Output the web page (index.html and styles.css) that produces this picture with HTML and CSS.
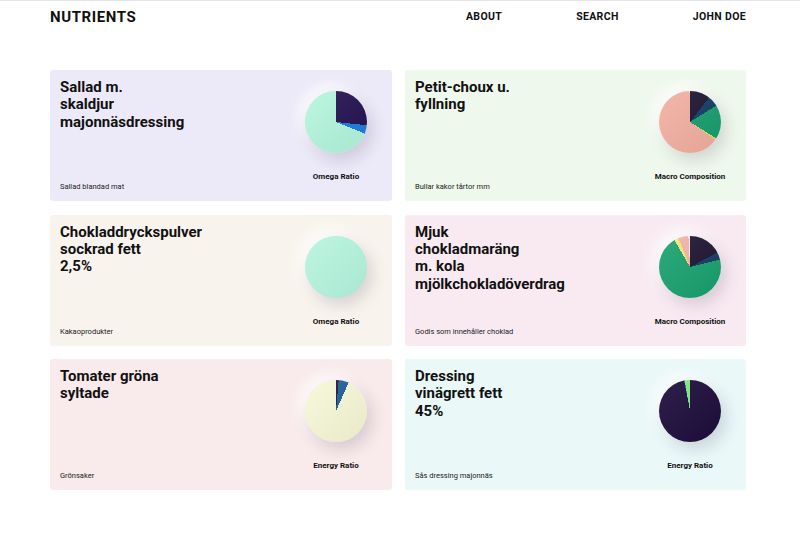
FILE: index.html
```html
<!DOCTYPE html>
<html lang="sv">
<head>
<meta charset="utf-8">
<title>Nutrients</title>
<link rel="stylesheet" href="styles.css">
</head>
<body>
<header class="topbar">
  <div class="brand">NUTRIENTS</div>
  <nav class="nav">
    <a class="nav-link">ABOUT</a>
    <a class="nav-link">SEARCH</a>
    <a class="nav-link">JOHN DOE</a>
  </nav>
</header>
<main class="grid">
  <article class="card bg-lavender">
    <div class="info">
      <h2 class="title">Sallad m. skaldjur majonnäsdressing</h2>
      <p class="category">Sallad blandad mat</p>
    </div>
    <div class="chart">
      <div class="pie pie-1"></div>
      <div class="chart-label">Omega Ratio</div>
    </div>
  </article>
  <article class="card bg-green">
    <div class="info">
      <h2 class="title">Petit-choux u. fyllning</h2>
      <p class="category">Bullar kakor tårtor mm</p>
    </div>
    <div class="chart">
      <div class="pie pie-2"></div>
      <div class="chart-label">Macro Composition</div>
    </div>
  </article>
  <article class="card bg-beige">
    <div class="info">
      <h2 class="title">Chokladdryckspulver sockrad fett 2,5%</h2>
      <p class="category">Kakaoprodukter</p>
    </div>
    <div class="chart">
      <div class="pie pie-3"></div>
      <div class="chart-label">Omega Ratio</div>
    </div>
  </article>
  <article class="card bg-pink">
    <div class="info">
      <h2 class="title">Mjuk chokladmaräng m. kola mjölkchokladöverdrag</h2>
      <p class="category">Godis som innehåller choklad</p>
    </div>
    <div class="chart">
      <div class="pie pie-4"></div>
      <div class="chart-label">Macro Composition</div>
    </div>
  </article>
  <article class="card bg-rose">
    <div class="info">
      <h2 class="title">Tomater gröna syltade</h2>
      <p class="category">Grönsaker</p>
    </div>
    <div class="chart">
      <div class="pie pie-5"></div>
      <div class="chart-label">Energy Ratio</div>
    </div>
  </article>
  <article class="card bg-cyan">
    <div class="info">
      <h2 class="title">Dressing vinägrett fett 45%</h2>
      <p class="category">Sås dressing majonnäs</p>
    </div>
    <div class="chart">
      <div class="pie pie-6"></div>
      <div class="chart-label">Energy Ratio</div>
    </div>
  </article>
</main>
</body>
</html>
```
FILE: styles.css
```css
* { box-sizing: border-box; }
html, body { margin: 0; padding: 0; background: #fff; }
body {
  font-family: Roboto, "Liberation Sans", sans-serif;
  color: #111;
  border-top: 1px solid #e4e4ea;
}
.topbar {
  display: flex;
  justify-content: space-between;
  align-items: center;
  height: 31px;
  padding: 0 54px 0 50px;
}
.brand {
  font-size: 15px;
  font-weight: 700;
  letter-spacing: 0.6px;
  color: #111;
}
.nav {
  display: flex;
  gap: 74px;
}
.nav-link {
  font-size: 10.5px;
  font-weight: 700;
  letter-spacing: 0.35px;
  color: #111;
}
.grid {
  display: grid;
  grid-template-columns: 342px 341px;
  grid-auto-rows: 131px;
  column-gap: 13px;
  row-gap: 13.5px;
  padding: 38px 0 0 50px;
}
.card {
  display: flex;
  border-radius: 3px;
}
.bg-lavender { background: #ece9f8; }
.bg-green { background: #eff8ec; }
.bg-beige { background: #f8f4ed; }
.bg-pink { background: #f9eaf2; }
.bg-rose { background: #f9eaeb; }
.bg-cyan { background: #eaf8f8; }
.info {
  flex: 1;
  display: flex;
  flex-direction: column;
  justify-content: space-between;
  padding: 9px 0 10px 10px;
}
.title {
  margin: 0;
  max-width: 104px;
  font-size: 15px;
  line-height: 17.4px;
  font-weight: 700;
  color: #111;
}
.category {
  margin: 0;
  font-size: 7.5px;
  line-height: 9px;
  color: #222;
}
.chart {
  width: 92px;
  margin-right: 10px;
  display: flex;
  flex-direction: column;
  align-items: center;
  justify-content: space-between;
  padding: 21px 0 19px;
}
.pie {
  width: 62px;
  height: 62px;
  border-radius: 50%;
  box-shadow: 5px 7px 16px rgba(40, 30, 60, 0.16), -6px -6px 16px rgba(255, 255, 255, 0.85);
}
.chart-label {
  font-size: 8px;
  font-weight: 700;
  line-height: 10px;
  color: #111;
}
.pie-1 {
  background: linear-gradient(135deg, rgba(255,255,255,0.1), rgba(0,0,0,0.06)),
    conic-gradient(#22104f 0deg 96deg, #1b7bdb 96deg 112deg, #b3f5dd 112deg 360deg);
}
.pie-2 {
  background: linear-gradient(135deg, rgba(255,255,255,0.1), rgba(0,0,0,0.06)),
    conic-gradient(#1c1230 0deg 38deg, #0f3b62 38deg 58deg, #169c6d 58deg 122deg, #e6df5e 122deg 125deg, #f2ae9f 125deg 359deg, #f5e0e0 359deg 360deg);
}
.pie-3 {
  background: linear-gradient(135deg, rgba(255,255,255,0.12), rgba(0,0,0,0.06)),
    #b4f5de;
}
.pie-4 {
  background: linear-gradient(135deg, rgba(255,255,255,0.1), rgba(0,0,0,0.06)),
    conic-gradient(#1c1230 0deg 62deg, #0f3b62 62deg 76deg, #17a06e 76deg 330deg, #eeec6c 330deg 338deg, #f3b2a6 338deg 357deg, #f8e8ee 357deg 360deg);
}
.pie-5 {
  background: linear-gradient(135deg, rgba(255,255,255,0.1), rgba(0,0,0,0.06)),
    conic-gradient(#1c1540 0deg 5deg, #1d5b98 5deg 24deg, #f7f8d6 24deg 360deg);
}
.pie-6 {
  background: linear-gradient(135deg, rgba(255,255,255,0.08), rgba(0,0,0,0.06)),
    conic-gradient(#1d0d3b 0deg 349deg, #2a6cb0 349deg 350deg, #7ee878 350deg 360deg);
}
```
